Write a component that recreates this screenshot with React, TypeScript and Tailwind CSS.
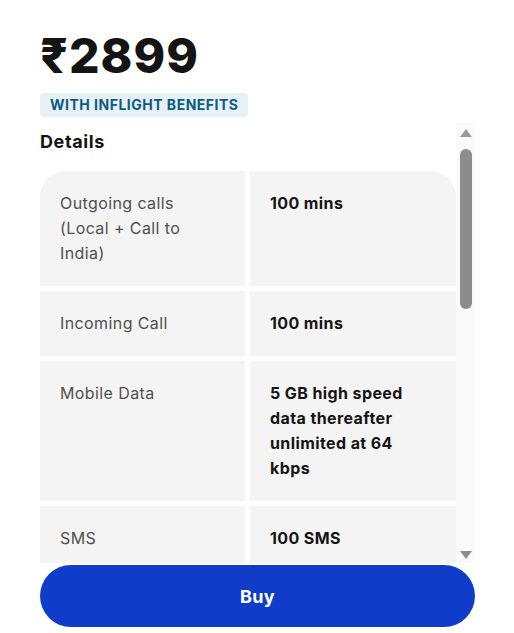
import React from "react";

const rows: { label: string; value: string }[] = [
  { label: "Outgoing calls (Local + Call to India)", value: "100 mins" },
  { label: "Incoming Call", value: "100 mins" },
  { label: "Mobile Data", value: "5 GB high speed data thereafter unlimited at 64 kbps" },
  { label: "SMS", value: "100 SMS" },
  { label: "Validity", value: "10 days" },
  { label: "Countries", value: "Australia, Canada, France, Germany, Italy, Japan, Singapore, UK, USA" },
  { label: "Inflight Calls", value: "100 mins" },
];

export default function App() {
  return (
    <div
      className="w-[514px] h-[633px] bg-white overflow-hidden pl-[40px] pr-[39px] pt-[28px]"
      style={{ fontFamily: "Inter, 'Noto Sans', sans-serif" }}
    >
      <div className="text-[48px] leading-[56px] font-extrabold tracking-[1px] text-[#141414]">
        ₹2899
      </div>
      <div className="mt-[9px] inline-flex h-[24px] items-center rounded-[4px] bg-[#e5f0f7] px-[10px] text-[14px] font-bold leading-[24px] text-[#0f5b80] tracking-[0.5px]">
        WITH INFLIGHT BENEFITS
      </div>
      <div className="mt-[6px] flex h-[440px]">
        <div className="w-[416px] overflow-hidden">
          <div className="pt-[7px] text-[18px] leading-[24px] font-bold tracking-[0.6px] text-[#141414]">
            Details
          </div>
          <div className="mt-[17px] grid w-[416px] grid-cols-[205px_206px] gap-[5px] text-[16px] leading-[25px] tracking-[0.4px]">
            {rows.map((r, i) => (
              <React.Fragment key={i}>
                <div
                  className={
                    "bg-[#f4f4f4] pl-[20px] pr-[22px] py-[20px] text-[#4f4f4f] " +
                    (i === 0 ? "rounded-tl-[26px]" : "")
                  }
                >
                  {r.label}
                </div>
                <div
                  className={
                    "bg-[#f4f4f4] pl-[20px] pr-[22px] py-[20px] font-bold text-[#141414] " +
                    (i === 0 ? "rounded-tr-[26px]" : "")
                  }
                >
                  {r.value}
                </div>
              </React.Fragment>
            ))}
          </div>
        </div>
        <div className="flex w-[19px] flex-col items-center bg-[#fafafa] pt-[6px] pb-[4px]">
          <svg width="12" height="8" viewBox="0 0 12 8">
            <path d="M6 0 L12 8 L0 8 Z" fill="#999999" />
          </svg>
          <div className="mt-[12px] h-[160px] w-[12px] rounded-full bg-[#8c8c8c]" />
          <div className="flex-1" />
          <svg width="12" height="8" viewBox="0 0 12 8">
            <path d="M0 0 L12 0 L6 8 Z" fill="#8c8c8c" />
          </svg>
        </div>
      </div>
      <button className="mt-[2px] flex h-[62px] w-[435px] items-center justify-center rounded-full bg-[#0f3cc9] text-[18px] font-bold tracking-[0.3px] text-white">
        Buy
      </button>
    </div>
  );
}
